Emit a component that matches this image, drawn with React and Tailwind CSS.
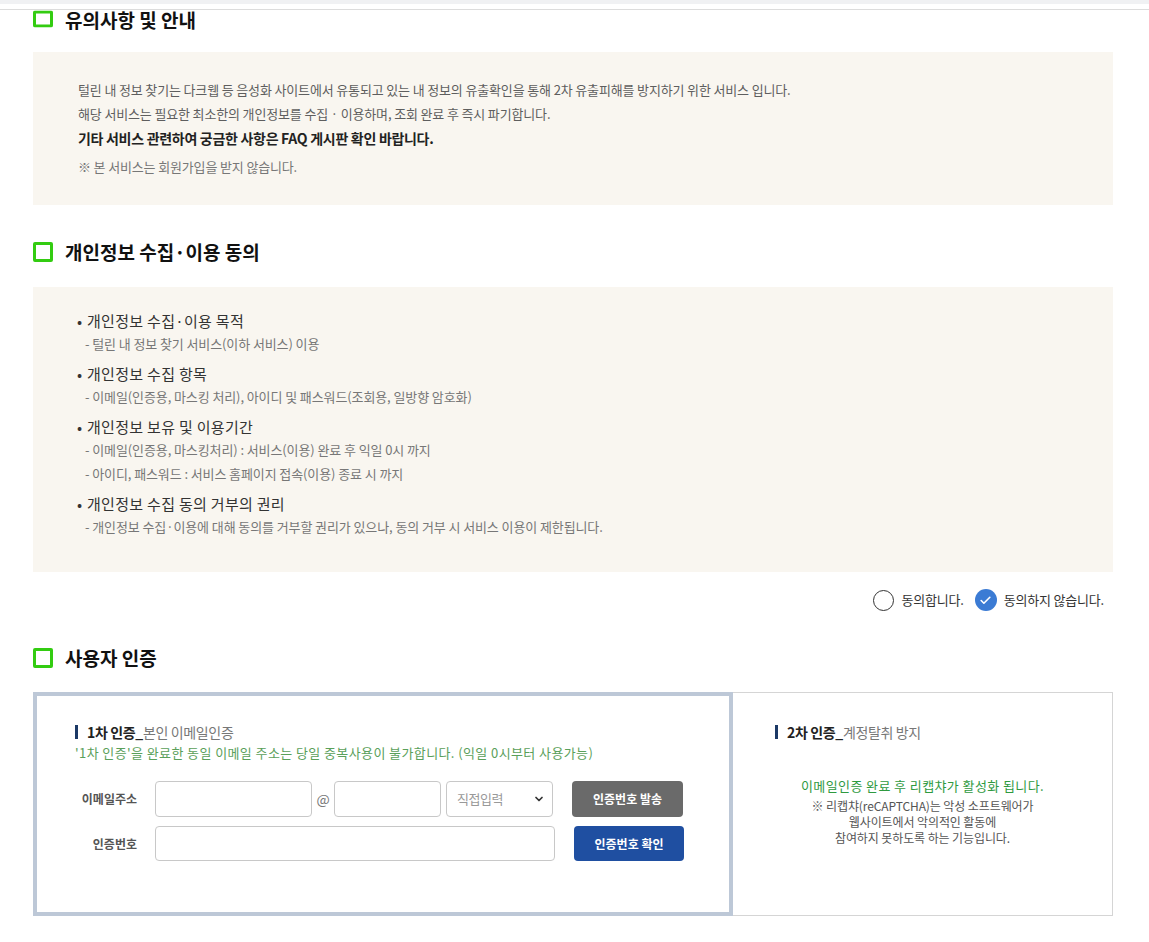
import { ChevronDown, Check } from "lucide-react";

const font = { fontFamily: '"Noto Sans CJK KR", "Noto Sans", sans-serif' };

function GreenSquare() {
  return <span className="box-border block h-[20px] w-[20px] rounded-[2px] border-[3px] border-[#33cc11]" />;
}

function SectionTitle({ children, className = "" }) {
  return (
    <div className={`flex h-[20px] items-center gap-[12px] ${className}`}>
      <GreenSquare />
      <h2 className="text-[19px] font-bold leading-[20px] text-[#111]">{children}</h2>
    </div>
  );
}

function SubTitle({ strong, rest }) {
  return (
    <div className="flex h-[20px] items-center">
      <span className="mr-[9px] h-[14px] w-[3px] bg-[#1c3966]" />
      <p className="text-[14px] leading-[20px] tracking-[-0.35px]">
        <span className="font-bold text-[#222]">{strong}</span>
        <span className="text-[#777]">{rest}</span>
      </p>
    </div>
  );
}

const policyItems = [
  { title: "개인정보 수집·이용 목적", lines: ["- 털린 내 정보 찾기 서비스(이하 서비스) 이용"] },
  {
    title: "개인정보 수집 항목",
    lines: ["- 이메일(인증용, 마스킹 처리), 아이디 및 패스워드(조회용, 일방향 암호화)"],
  },
  {
    title: "개인정보 보유 및 이용기간",
    lines: [
      "- 이메일(인증용, 마스킹처리) : 서비스(이용) 완료 후 익일 0시 까지",
      "- 아이디, 패스워드 : 서비스 홈페이지 접속(이용) 종료 시 까지",
    ],
  },
  {
    title: "개인정보 수집 동의 거부의 권리",
    lines: ["- 개인정보 수집·이용에 대해 동의를 거부할 권리가 있으나, 동의 거부 시 서비스 이용이 제한됩니다."],
  },
];

export default function App() {
  return (
    <div className="min-h-[942px] bg-white" style={font}>
      <div className="h-[4px] bg-[#f0f1f3]" />
      <div className="h-[6px] border-b border-[#dcdcdc]" />

      <div className="ml-[33px] w-[1080px]">
        {/* page is scrolled: top of the first square is cut by the bar */}
        <div className="flex h-[20px] items-center gap-[12px]">
          <span className="flex h-[17px] w-[20px] -translate-y-[1.5px] flex-col justify-end overflow-hidden">
            <GreenSquare />
          </span>
          <h2 className="text-[19px] font-bold leading-[20px] text-[#111]">유의사항 및 안내</h2>
        </div>

        <div className="mt-[22px] bg-[#f9f6f0] pb-[26px] pl-[45px] pt-[26px] text-[13px] leading-[24px] tracking-[-0.15px] text-[#5e5e5e]">
          <p>
            털린 내 정보 찾기는 다크웹 등 음성화 사이트에서 유통되고 있는 내 정보의 유출확인을 통해 2차
            유출피해를 방지하기 위한 서비스 입니다.
          </p>
          <p>해당 서비스는 필요한 최소한의 개인정보를 수집 · 이용하며, 조회 완료 후 즉시 파기합니다.</p>
          <p className="text-[14px] font-semibold tracking-[-0.3px] text-[#222]">
            기타 서비스 관련하여 궁금한 사항은 FAQ 게시판 확인 바랍니다.
          </p>
          <p className="mt-[5px] text-[#777]">※ 본 서비스는 회원가입을 받지 않습니다.</p>
        </div>

        <SectionTitle className="mt-[37px]">개인정보 수집·이용 동의</SectionTitle>

        <div className="mt-[25px] flex flex-col gap-[7px] bg-[#f9f6f0] pb-[33px] pl-[44px] pt-[23px]">
          {policyItems.map((item) => (
            <div key={item.title}>
              <p className="flex text-[15px] leading-[22px] tracking-[0.3px] text-[#333]">
                <span className="w-[10px]">•</span>
                {item.title}
              </p>
              {item.lines.map((line) => (
                <p key={line} className="pl-[8px] text-[13px] leading-[24px] tracking-[-0.1px] text-[#777]">
                  {line}
                </p>
              ))}
            </div>
          ))}
        </div>

        <div className="mt-[17px] flex h-[22px] items-center justify-end pr-[9px] text-[13px] tracking-[-0.2px] text-[#333]">
          <label className="flex items-center gap-[8px]">
            <span className="box-border h-[21px] w-[21px] rounded-full border border-[#333] bg-white" />
            동의합니다.
          </label>
          <label className="ml-[11px] flex items-center gap-[7px]">
            <span className="flex h-[22px] w-[22px] items-center justify-center rounded-full bg-[#3b7bd4]">
              <Check size={13} strokeWidth={3} className="text-white" />
            </span>
            동의하지 않습니다.
          </label>
        </div>

        <SectionTitle className="mt-[37px]">사용자 인증</SectionTitle>

        <div className="mt-[24px] flex h-[224px]">
          <div className="box-border w-[700px] border-4 border-[#bdc8d7] pl-[38px] pt-[26px]">
            <SubTitle strong="1차 인증_" rest="본인 이메일인증" />
            <p className="text-[13px] leading-[22px] tracking-[0.4px] text-[#5aa05a]">
              '1차 인증'을 완료한 동일 이메일 주소는 당일 중복사용이 불가합니다. (익일 0시부터 사용가능)
            </p>

            <div className="mt-[17px] flex items-center">
              <span className="w-[62px] text-right text-[12px] font-bold text-[#555]">이메일주소</span>
              <input
                className="ml-[18px] box-border h-[36px] w-[157px] rounded-[4px] border border-[#c8c8c8] bg-white"
                aria-label="email id"
              />
              <span className="w-[22px] text-center text-[14px] text-[#777]">@</span>
              <input
                className="box-border h-[36px] w-[107px] rounded-[4px] border border-[#c8c8c8] bg-white"
                aria-label="email domain"
              />
              <div className="relative ml-[5px] h-[36px] w-[107px]">
                <select className="box-border h-full w-full appearance-none rounded-[4px] border border-[#c8c8c8] bg-white pl-[10px] text-[13px] tracking-[-0.5px] text-[#999]">
                  <option>직접입력</option>
                </select>
                <ChevronDown
                  size={12}
                  strokeWidth={3.5}
                  className="pointer-events-none absolute right-[8px] top-[12px] text-[#333]"
                />
              </div>
              <button className="ml-[19px] h-[36px] w-[111px] rounded-[4px] bg-[#6a6a6a] text-[12px] font-bold text-white">
                인증번호 발송
              </button>
            </div>

            <div className="mt-[9px] flex items-center">
              <span className="w-[62px] text-right text-[12px] font-bold text-[#555]">인증번호</span>
              <input
                className="ml-[18px] box-border h-[35px] w-[400px] rounded-[4px] border border-[#c8c8c8] bg-white"
                aria-label="code"
              />
              <button className="ml-[19px] h-[35px] w-[110px] rounded-[4px] bg-[#1f4fa1] text-[12px] font-bold text-white">
                인증번호 확인
              </button>
            </div>
          </div>

          <div className="box-border flex w-[380px] flex-col border-y border-r border-[#d5d5d5] pl-[42px] pt-[29px]">
            <SubTitle strong="2차 인증_" rest="계정탈취 방지" />
            <div className="-ml-[42px] mt-[34px] text-center">
              <p className="text-[13px] leading-[20px] tracking-[0.4px] text-[#2f9a3f]">
                이메일인증 완료 후 리캡챠가 활성화 됩니다.
              </p>
              <p className="mt-[2px] text-[12px] leading-[16px] tracking-[-0.1px] text-[#555]">
                ※ 리캡챠(reCAPTCHA)는 악성 소프트웨어가
                <br />
                웹사이트에서 악의적인 활동에
                <br />
                참여하지 못하도록 하는 기능입니다.
              </p>
            </div>
          </div>
        </div>
      </div>
    </div>
  );
}
